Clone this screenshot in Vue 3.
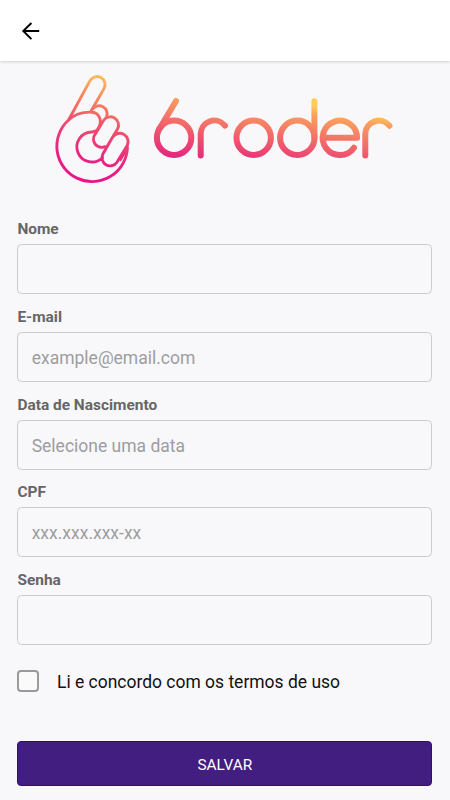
<script setup>
import { ref } from 'vue'

const fields = ref([
  { id: 'nome', label: 'Nome', type: 'text', placeholder: '', value: '' },
  { id: 'email', label: 'E-mail', type: 'text', placeholder: 'example@email.com', value: '' },
  { id: 'data', label: 'Data de Nascimento', type: 'text', placeholder: 'Selecione uma data', value: '' },
  { id: 'cpf', label: 'CPF', type: 'text', placeholder: 'xxx.xxx.xxx-xx', value: '' },
  { id: 'senha', label: 'Senha', type: 'password', placeholder: '', value: '' }
])
const accepted = ref(false)
</script>

<template>
  <div class="screen">
    <header class="bar">
      <button class="back" type="button" aria-label="Voltar">
        <svg width="20" height="20" viewBox="0 0 20 20" fill="none" stroke="#000" stroke-width="1.9">
          <path d="M19.2 10H3.2M11.4 2L3.3 10l8.1 8.1" />
        </svg>
      </button>
    </header>

    <svg class="logo" viewBox="50 72 350 114" fill="none" stroke-linecap="round" stroke-linejoin="round">
      <defs>
        <linearGradient id="hand" gradientUnits="userSpaceOnUse" x1="82" y1="178" x2="108" y2="78">
          <stop offset="0" stop-color="#ea1489" />
          <stop offset="0.25" stop-color="#e92880" />
          <stop offset="0.55" stop-color="#f0556a" />
          <stop offset="0.8" stop-color="#f98b5c" />
          <stop offset="1" stop-color="#ffbd57" />
        </linearGradient>
        <linearGradient id="word" gradientUnits="userSpaceOnUse" x1="200" y1="161" x2="209" y2="92">
          <stop offset="0" stop-color="#e3267f" />
          <stop offset="0.3" stop-color="#ee4c70" />
          <stop offset="0.6" stop-color="#f57966" />
          <stop offset="0.85" stop-color="#fa9e5d" />
          <stop offset="1" stop-color="#ffcc57" />
        </linearGradient>
      </defs>
      <g stroke="url(#hand)" stroke-width="2.9">
        <path d="M68.6 120L90 80.6A8 8 0 0 1 104 88.6L91.2 110.7" />
        <path d="M127.4 148A35.3 35.3 0 1 1 68.6 120C75 114 84 111.8 92 112.2C98 112.3 101.2 118.5 100.2 123.5C99.3 128 96.5 132 91.7 132A15 15 0 1 0 102.4 157.7" />
        <path d="M92.8 109A7.9 7.9 0 0 1 106.6 116.4" />
        <path d="M105 146.7A8.2 8.2 0 0 1 95.2 134.2L103.3 120.8A8.2 8.2 0 0 1 117.4 129.2L113.5 135.7" />
        <path d="M112.5 137.3A8.4 8.4 0 0 1 126.9 146L117 162.3A8.2 8.2 0 0 1 103 153.8Z" />
        <path d="M128.1 141.7L127 149.5L120.5 160" stroke-width="2.2" />
      </g>
      <g stroke="url(#word)" stroke-width="6">
        <circle cx="174.1" cy="137.7" r="17.2" />
        <path d="M176 101L159 129.5" />
        <path d="M200.7 155.5V134A13.6 13.6 0 0 1 225 125.7" />
        <circle cx="253.7" cy="137.7" r="17.2" />
        <circle cx="297.3" cy="137.7" r="17.2" />
        <path d="M314.4 101.2V137.7" />
        <path d="M324 137.7H357.1A17.2 17.2 0 1 0 354 147.7" />
        <path d="M365.3 155.5V134A13.6 13.6 0 0 1 389.5 125.7" />
      </g>
    </svg>

    <form class="form" @submit.prevent>
      <div v-for="field in fields" :key="field.id" class="field">
        <label class="label" :for="field.id">{{ field.label }}</label>
        <input :id="field.id" v-model="field.value" class="input" :type="field.type" :placeholder="field.placeholder" />
      </div>

      <label class="terms">
        <input v-model="accepted" class="check" type="checkbox" />
        <span>Li e concordo com os termos de uso</span>
      </label>

      <button class="save" type="submit">SALVAR</button>
    </form>
  </div>
</template>

<style>
body {
  margin: 0;
  background: #f8f8fb;
}
</style>

<style scoped>
.screen {
  box-sizing: border-box;
  width: 100%;
  height: 800px;
  overflow: hidden;
  display: flex;
  flex-direction: column;
  background: #f8f8fb;
  font-family: Roboto, sans-serif;
}
.bar {
  box-sizing: border-box;
  flex: none;
  height: 61px;
  padding-left: 20px;
  display: flex;
  align-items: center;
  background: #fff;
  box-shadow: 0 1px 3px rgba(0, 0, 0, 0.16);
}
.back {
  display: flex;
  padding: 0;
  border: 0;
  background: none;
}
.logo {
  flex: none;
  width: 350px;
  height: 114px;
  margin: 11px 0 0 50px;
}
.form {
  display: flex;
  flex-direction: column;
  padding: 33.3px 17.6px 0 17.4px;
}
.field {
  height: 87.7px;
  display: flex;
  flex-direction: column;
}
.label {
  height: 24.9px;
  line-height: 21px;
  font-size: 15.45px;
  font-weight: 700;
  color: #666;
}
.input {
  box-sizing: border-box;
  width: 100%;
  height: 50px;
  padding: 2px 13.3px 0;
  border: 1px solid #ccccd0;
  border-radius: 4.5px;
  outline: none;
  background: transparent;
  font: 400 17.5px Roboto, sans-serif;
  color: #222;
}
.input::placeholder {
  color: #9d9d9f;
  opacity: 1;
}
.terms {
  height: 22px;
  margin-top: 12.4px;
  display: flex;
  align-items: center;
  gap: 17.6px;
  font-size: 17.48px;
  color: #111;
}
.terms span {
  padding-top: 1px;
}
.check {
  appearance: none;
  box-sizing: border-box;
  width: 22px;
  height: 22px;
  margin: 0;
  border: 2px solid #9a9a9a;
  border-radius: 4px;
  background: #fafafa;
}
.check:checked {
  background: #411e7f;
}
.save {
  height: 45px;
  margin-top: 49px;
  padding: 2px 0 0;
  border: 1px solid #340b7c;
  border-radius: 4px;
  background: #411e7f;
  font: 400 15.4px Roboto, sans-serif;
  color: #fff;
}
</style>
